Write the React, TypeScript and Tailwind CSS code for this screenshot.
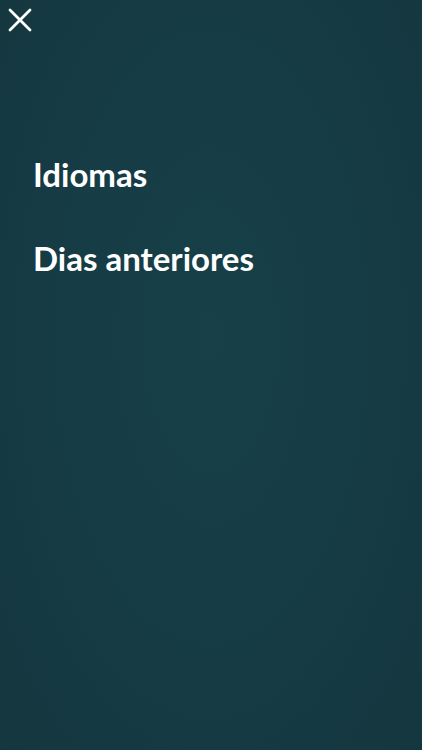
export default function App() {
  return (
    <div className="w-[422px] h-[750px] overflow-hidden bg-[#163c45] bg-[radial-gradient(ellipse_at_50%_45%,#174049_0%,#163c45_50%,#14363f_100%)] font-['Lato','Liberation_Sans',sans-serif] text-white">
      <button className="block pt-[8px] pl-[8px]" aria-label="Fechar">
        <svg width="24" height="24" viewBox="0 0 24 24" fill="none" stroke="white" strokeWidth="2.8" strokeLinecap="round">
          <path d="M2 2 L22 22 M22 2 L2 22" />
        </svg>
      </button>
      <nav className="flex flex-col gap-[44px] pl-[33px] pt-[122px]">
        <a className="text-[33px] leading-[40px] font-bold">Idiomas</a>
        <a className="text-[33px] leading-[40px] font-bold">Dias anteriores</a>
      </nav>
    </div>
  );
}
